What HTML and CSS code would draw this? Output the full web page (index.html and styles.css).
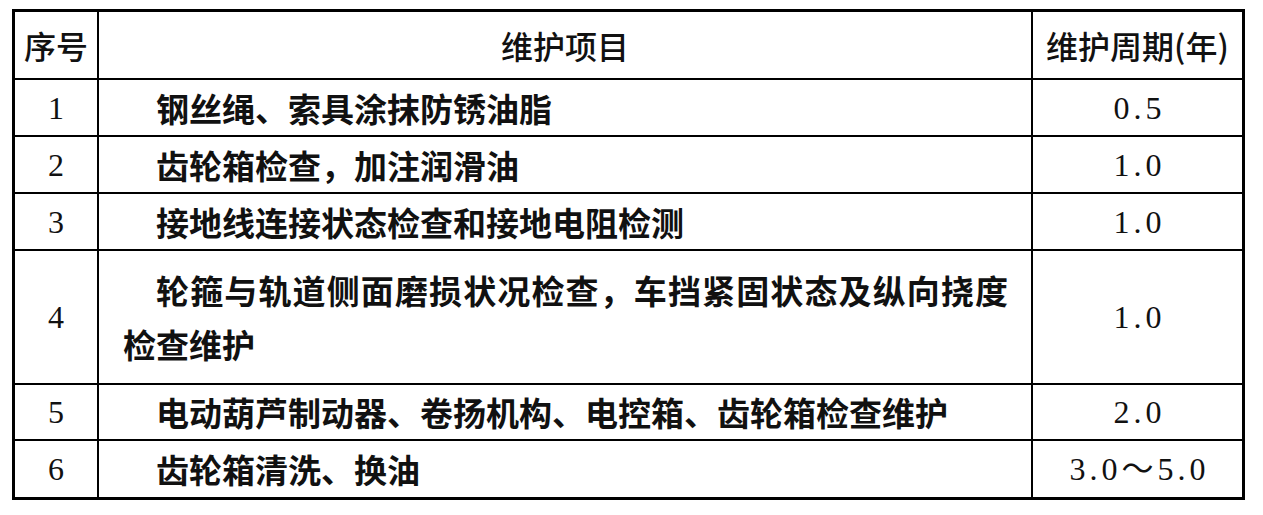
FILE: index.html
```html
<!DOCTYPE html>
<html lang="zh-CN">
<head>
<meta charset="utf-8">
<title>维护项目</title>
<link rel="stylesheet" href="styles.css">
</head>
<body>
<table class="spec">
  <thead>
    <tr class="r-head">
      <th class="c-no">序号</th>
      <th class="c-item">维护项目</th>
      <th class="c-cycle">维护周期(年)</th>
    </tr>
  </thead>
  <tbody>
    <tr class="r-std">
      <td class="no">1</td>
      <td class="item">钢丝绳、索具涂抹防锈油脂</td>
      <td class="cycle">0.5</td>
    </tr>
    <tr class="r-std">
      <td class="no">2</td>
      <td class="item">齿轮箱检查，加注润滑油</td>
      <td class="cycle">1.0</td>
    </tr>
    <tr class="r-std">
      <td class="no">3</td>
      <td class="item">接地线连接状态检查和接地电阻检测</td>
      <td class="cycle">1.0</td>
    </tr>
    <tr class="r-tall">
      <td class="no">4</td>
      <td class="item">轮箍与轨道侧面磨损状况检查，车挡紧固状态及纵向挠度检查维护</td>
      <td class="cycle">1.0</td>
    </tr>
    <tr class="r-short">
      <td class="no">5</td>
      <td class="item">电动葫芦制动器、卷扬机构、电控箱、齿轮箱检查维护</td>
      <td class="cycle">2.0</td>
    </tr>
    <tr class="r-short r-last">
      <td class="no">6</td>
      <td class="item">齿轮箱清洗、换油</td>
      <td class="cycle">3.0～5.0</td>
    </tr>
  </tbody>
</table>
</body>
</html>
```
FILE: styles.css
```css
html, body {
  margin: 0;
  padding: 0;
  background: #fff;
}

body {
  color: #111;
  font-family: "Noto Sans CJK SC", sans-serif;
}

.spec {
  margin: 9px 0 0 12px;
  width: 1233px;
  table-layout: fixed;
  border-collapse: separate;
  border-spacing: 0;
  border: 3px solid #000;
}

.spec th,
.spec td {
  box-sizing: border-box;
  padding: 0;
  border-right: 2px solid #000;
  border-bottom: 2px solid #000;
  vertical-align: middle;
  text-align: center;
}

.spec th:last-child,
.spec td:last-child {
  border-right: none;
}

.spec .r-last td {
  border-bottom: none;
}

.c-no { width: 84px; }
.c-item { width: 934px; }
.c-cycle { width: 209px; }

.spec th {
  font-family: "Noto Sans CJK SC", sans-serif;
  font-weight: 500;
  font-size: 32px;
  line-height: 40px;
  color: #111;
}

.r-head th { height: 68px; }
.r-std td { height: 57px; }
.r-tall td { height: 134px; }
.r-short td { height: 56px; }

.no {
  font-family: "Liberation Serif", "Noto Sans CJK SC", serif;
  font-size: 32px;
  line-height: 40px;
}

.item {
  font-family: "Noto Sans CJK SC", sans-serif;
  font-weight: 700;
  font-size: 33px;
  line-height: 54px;
  text-align: justify !important;
  text-indent: 33px;
  padding: 0 23px 0 24px !important;
}

.cycle {
  font-family: "Liberation Serif", "Noto Sans CJK SC", serif;
  font-size: 32px;
  line-height: 40px;
  letter-spacing: 4px;
  padding-left: 4px !important;
}
```
